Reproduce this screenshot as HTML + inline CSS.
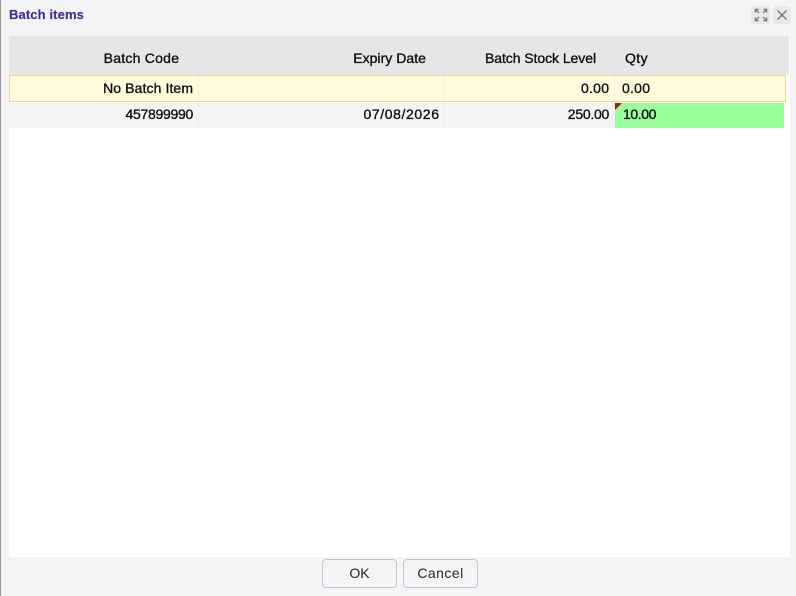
<!DOCTYPE html>
<html>
<head>
<meta charset="utf-8">
<style>
html,body{margin:0;padding:0;width:796px;height:596px;overflow:hidden;background:#f4f4f4;font-family:"Liberation Sans",sans-serif;color:#111}
.a{position:absolute}
.t{position:absolute;font-size:14px;line-height:16px;white-space:nowrap;color:#0e0e18;-webkit-text-stroke:.35px #0e0e18}
.r{text-align:right}
</style>
</head>
<body>
<div class="a" style="left:0;top:0;width:1px;height:596px;background:#9a9a9a"></div>
<div class="t" style="left:9px;top:7px;font-weight:bold;font-size:13px;letter-spacing:.12px;color:#4a2a96;-webkit-text-stroke:.15px #4a2a96">Batch items</div>

<div class="a" style="left:751px;top:6px;width:19px;height:18px;border-radius:4px;background:#e8e8e8"></div>
<svg class="a" style="left:752px;top:6px" width="18" height="18" viewBox="0 0 18 18" fill="none" stroke="#777" stroke-width="1.5"><path d="M3.5 6.5V3.5H6.5M11.5 3.5H14.5V6.5M14.5 11.5V14.5H11.5M6.5 14.5H3.5V11.5"/><path d="M4 4L7 7M14 4L11 7M14 14L11 11M4 14L7 11" stroke-width="1.2"/></svg>
<div class="a" style="left:773px;top:6px;width:18px;height:18px;border-radius:4px;background:#e8e8e8"></div>
<svg class="a" style="left:773px;top:6px" width="18" height="18" viewBox="0 0 18 18" fill="none" stroke="#777" stroke-width="1.4"><path d="M4.5 4.5L13.5 13.5M13.5 4.5L4.5 13.5"/></svg>

<div class="a" style="left:9px;top:36px;width:781px;height:521px;background:#fff"></div>
<div class="a" style="left:9px;top:36px;width:780px;height:39px;background:#e6e6e6"></div>

<div class="t r" style="left:9px;width:170.24px;top:50px;letter-spacing:.24px">Batch Code</div>
<div class="t r" style="left:200px;width:226px;top:50px;letter-spacing:.04px">Expiry Date</div>
<div class="t r" style="left:446px;width:150px;top:50px;letter-spacing:-.06px">Batch Stock Level</div>
<div class="t" style="left:625px;top:50px;letter-spacing:.4px">Qty</div>

<div class="a" style="left:9px;top:75px;width:775px;height:25px;background:#fffbdc;border:1px solid #f5d88e"></div>
<div class="a" style="left:198px;top:76px;width:1px;height:25px;background:#eeeeee"></div>
<div class="a" style="left:444px;top:76px;width:1px;height:25px;background:#eeeeee"></div>
<div class="a" style="left:614px;top:76px;width:1px;height:25px;background:#eeeeee"></div>

<div class="a" style="left:9px;top:103px;width:606px;height:25px;background:#f4f4f4"></div>
<div class="a" style="left:198px;top:103px;width:1px;height:25px;background:#ececec"></div>
<div class="a" style="left:444px;top:103px;width:1px;height:25px;background:#ececec"></div>
<div class="a" style="left:615px;top:103px;width:169px;height:25px;background:#99ff99"></div>
<div class="a" style="left:615px;top:103px;width:0;height:0;border-top:7px solid #b01010;border-right:7px solid transparent"></div>

<div class="t r" style="left:9px;width:184.1px;top:80px;letter-spacing:.1px">No Batch Item</div>
<div class="t r" style="left:446px;width:163.25px;top:80px;letter-spacing:.25px">0.00</div>
<div class="t" style="left:622px;top:80px;letter-spacing:.25px">0.00</div>

<div class="t r" style="left:9px;width:184px;top:106px;letter-spacing:-.28px">457899990</div>
<div class="t r" style="left:200px;width:239.6px;top:106px;letter-spacing:.6px">07/08/2026</div>
<div class="t r" style="left:446px;width:163px;top:106px;letter-spacing:-.27px">250.00</div>
<div class="t" style="left:623px;top:106px;letter-spacing:-.4px">10.00</div>

<div class="a" style="left:322px;top:559px;width:73px;height:27px;border:1px solid #c8c0e0;border-radius:4px;background:#f4f4f4"></div>
<div class="t" style="left:322px;width:75px;top:565px;text-align:center;color:#333;-webkit-text-stroke:.1px #333">OK</div>
<div class="a" style="left:403px;top:559px;width:73px;height:27px;border:1px solid #c8c0e0;border-radius:4px;background:#f4f4f4"></div>
<div class="t" style="left:403px;width:75px;top:565px;text-align:center;color:#333;letter-spacing:.45px;-webkit-text-stroke:.1px #333">Cancel</div>
</body>
</html>
